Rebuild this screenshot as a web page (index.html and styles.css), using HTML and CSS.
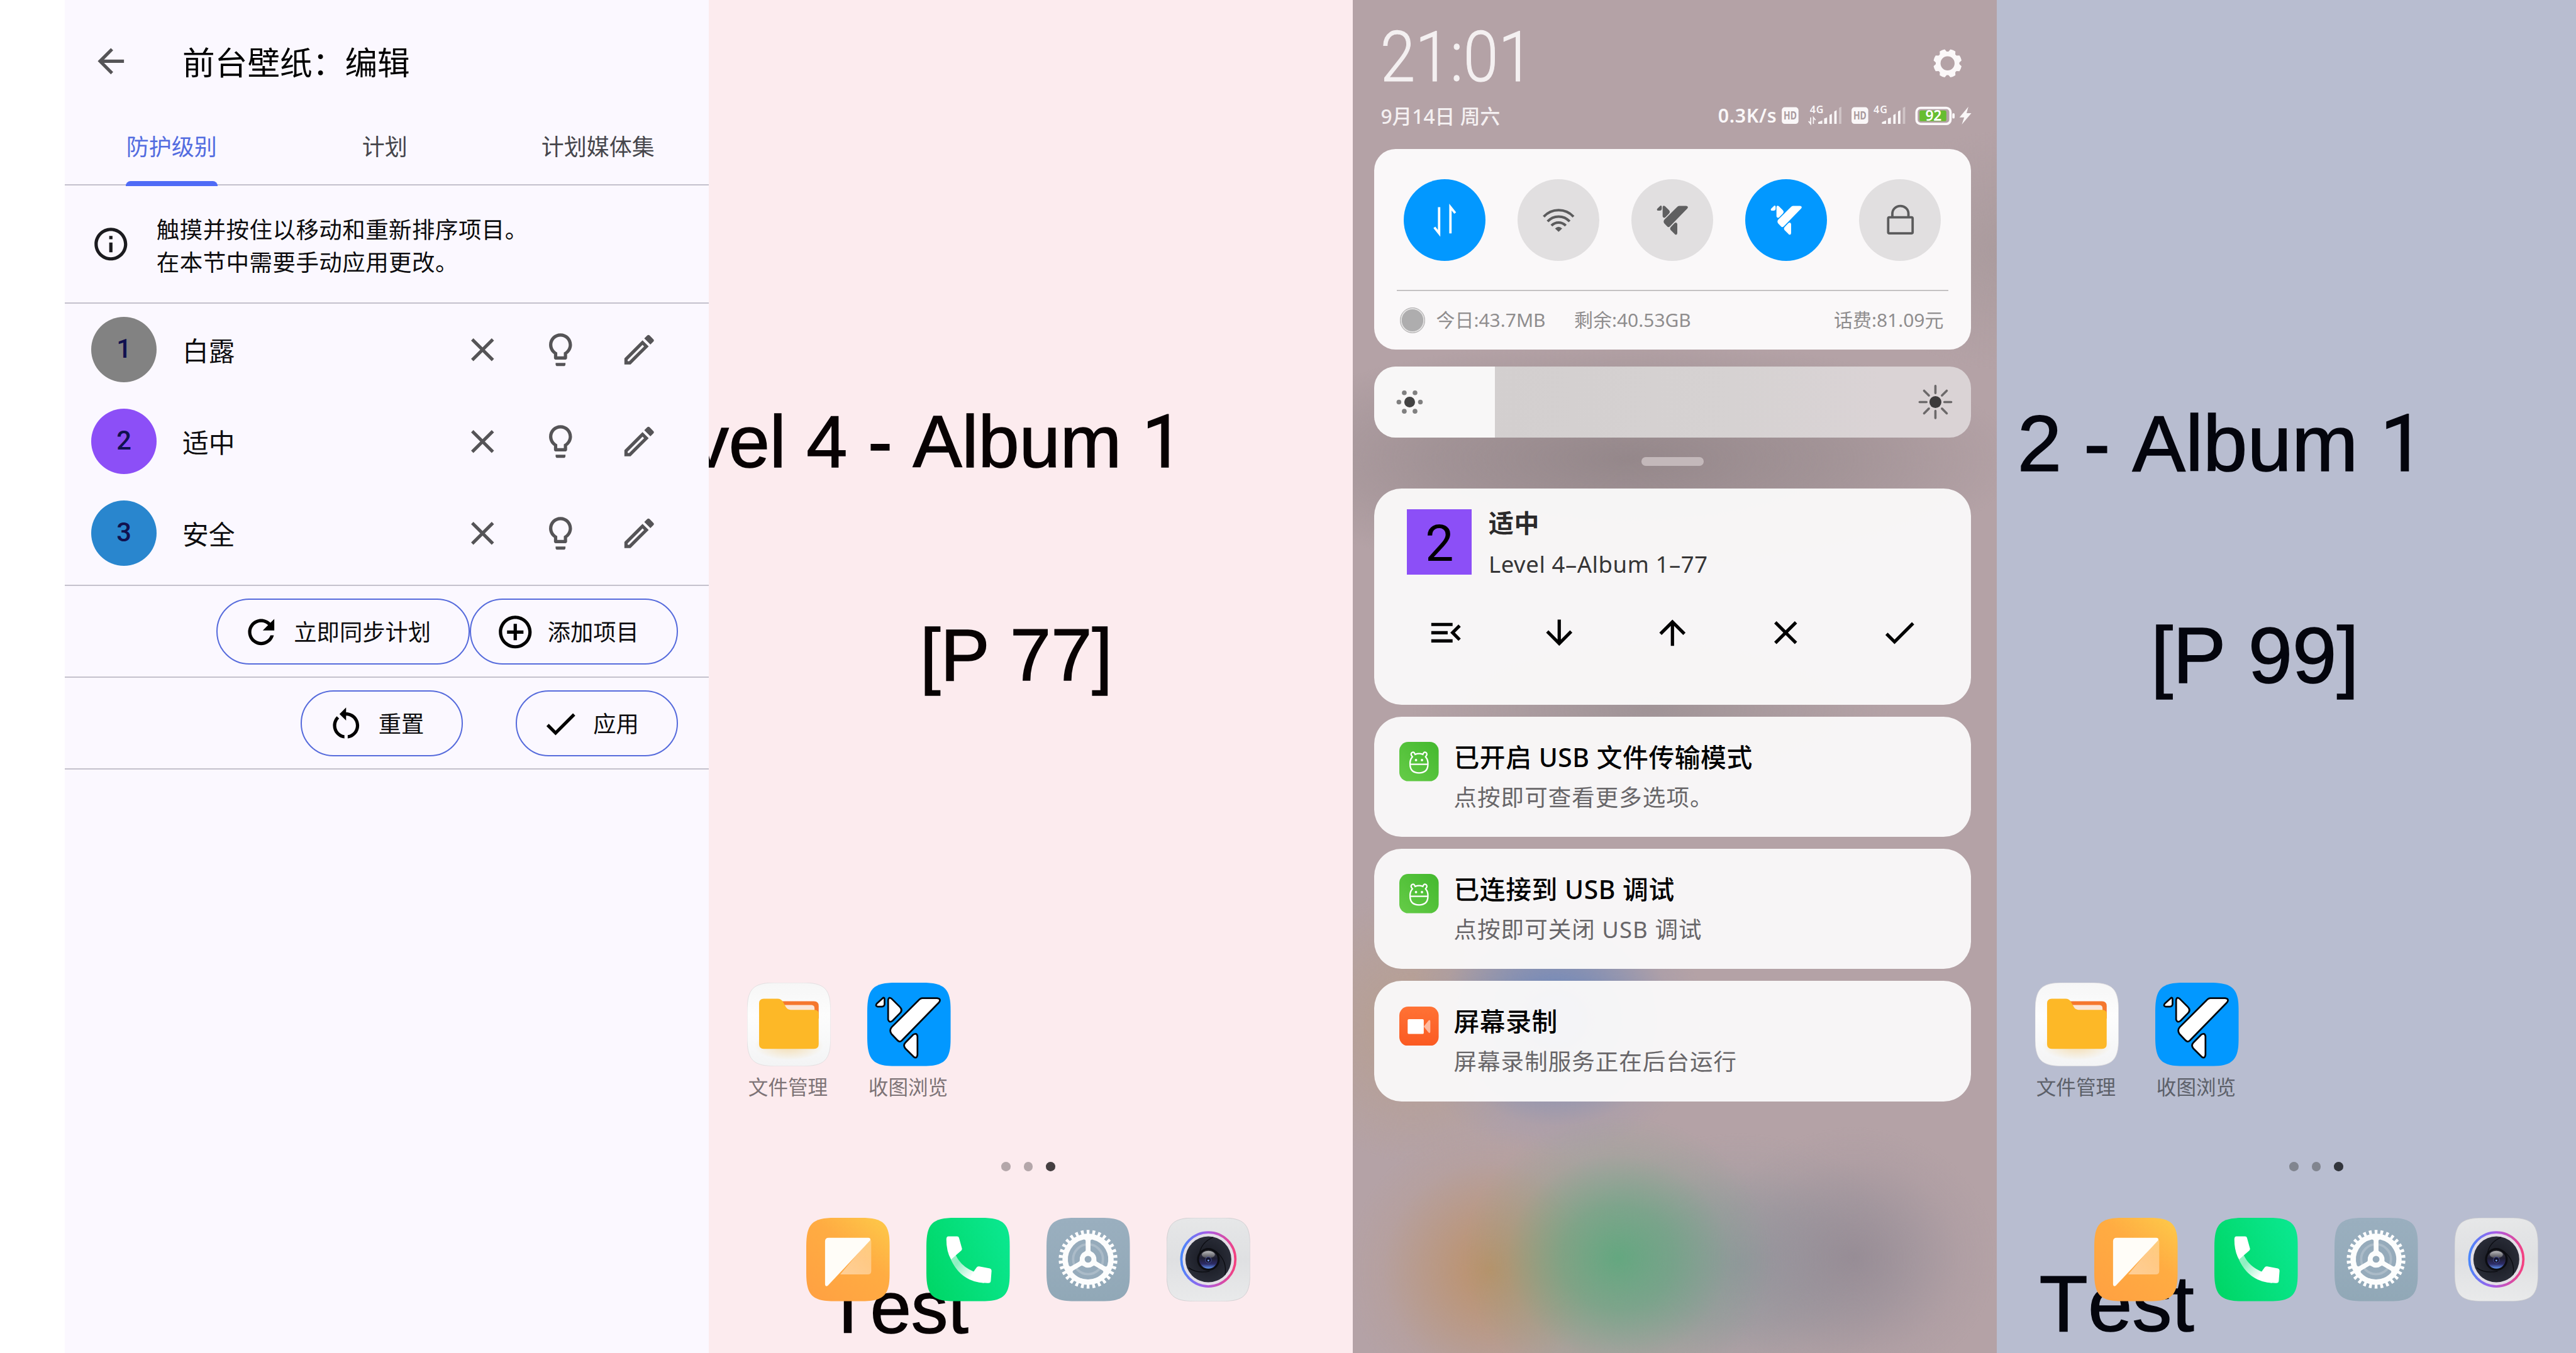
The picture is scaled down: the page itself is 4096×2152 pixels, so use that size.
FILE: index.html
```html
<!DOCTYPE html>
<html lang="zh-CN">
<head>
<meta charset="utf-8">
<title>前台壁纸：编辑</title>
<link rel="stylesheet" href="styles.css">
</head>
<body>
<!-- Shared icon definitions -->
<svg class="defs" aria-hidden="true">
  <defs>
    <linearGradient id="g-file" x1="0" y1="0" x2="0" y2="1"><stop offset="0" stop-color="#f6f6f6"/><stop offset=".4" stop-color="#fdfdfd"/><stop offset="1" stop-color="#f3f4f5"/></linearGradient>
    <radialGradient id="g-glow" cx=".5" cy=".5" r=".5"><stop offset=".3" stop-color="#f3dcae" stop-opacity=".7"/><stop offset="1" stop-color="#f3dcae" stop-opacity="0"/></radialGradient>
    <linearGradient id="g-msg" x1=".2" y1="1" x2="1" y2="0"><stop offset="0" stop-color="#ffa242"/><stop offset=".55" stop-color="#ffac42"/><stop offset="1" stop-color="#fdcb4a"/></linearGradient>
    <linearGradient id="g-fold" x1="1" y1="0" x2="0" y2="1"><stop offset="0" stop-color="#fff" stop-opacity=".3"/><stop offset="1" stop-color="#fff" stop-opacity=".45"/></linearGradient>
    <linearGradient id="g-call" x1="0" y1=".7" x2="1" y2=".3"><stop offset="0" stop-color="#00d768"/><stop offset="1" stop-color="#0ae78e"/></linearGradient>
    <linearGradient id="g-wire" gradientUnits="userSpaceOnUse" x1="42" y1="66" x2="78" y2="98"><stop offset="0" stop-color="#fff" stop-opacity=".6"/><stop offset=".3" stop-color="#fff" stop-opacity=".55"/><stop offset="1" stop-color="#fff"/></linearGradient>
    <linearGradient id="g-set" x1="0" y1="0" x2="0" y2="1"><stop offset="0" stop-color="#9aafbf"/><stop offset="1" stop-color="#91a8b7"/></linearGradient>
    <linearGradient id="g-cam" x1="0" y1="0" x2="0" y2="1"><stop offset="0" stop-color="#e6e7e8"/><stop offset=".5" stop-color="#dfe0e2"/><stop offset="1" stop-color="#e9eaeb"/></linearGradient>
    <linearGradient id="g-ring" x1="0" y1=".55" x2="1" y2=".6"><stop offset="0" stop-color="#4a86fb"/><stop offset=".45" stop-color="#a55ce8"/><stop offset="1" stop-color="#f5407f"/></linearGradient>
    <radialGradient id="g-disc"><stop offset="0" stop-color="#15171f"/><stop offset="1" stop-color="#292c37"/></radialGradient>
    <linearGradient id="g-lens" x1="0" y1="0" x2="0" y2="1"><stop offset="0" stop-color="#3d3d42"/><stop offset=".45" stop-color="#1f1f35"/><stop offset=".75" stop-color="#2d2b66"/><stop offset="1" stop-color="#5f92f0"/></linearGradient>
    <linearGradient id="g-gloss" x1="0" y1="0" x2="0" y2="1"><stop offset="0" stop-color="#b9b9bb"/><stop offset="1" stop-color="#4a4a52"/></linearGradient>
    <linearGradient id="g-bot" x1="1" y1="0" x2="0" y2="1"><stop offset="0" stop-color="#43b82e"/><stop offset="1" stop-color="#66cc48"/></linearGradient>
    <linearGradient id="g-rec" x1="0" y1="0" x2="0" y2="1"><stop offset="0" stop-color="#ff7235"/><stop offset="1" stop-color="#fb5a22"/></linearGradient>
  </defs>

  <symbol id="squircle" viewBox="0 0 140 140"><path d="M0 48C0 10 10 0 48 0H92C130 0 140 10 140 48V92C140 130 130 140 92 140H48C10 140 0 130 0 92Z"/></symbol>

  <symbol id="mark" viewBox="0 0 140 140">
    <path d="M26.7 25.3Q29 25 29 28V36Q28.7 40 24.500 40.200L17.500 40.200Q12.500 39 16.500 34.500Z"/>
    <path d="M35 29Q36 23 41 27L54.500 40.500Q60 46 55 51L42.500 63.800Q37 68 35 62Z"/>
    <path d="M92.300 26H117Q125 27 120 33.500L58 97Q54 100.500 50.500 96.500L40.500 86Q36.500 80 41 74.500L86 29.500Q89 26 92.300 26Z"/>
    <path d="M76.700 87.500Q83 83 84.200 90V121Q83 128.500 77.500 124L64 110.500Q59.500 105 64 100.500Z"/>
  </symbol>

  <symbol id="app-files" viewBox="0 0 140 140">
    <use href="#squircle" width="140" height="140" fill="url(#g-file)" stroke="#dcdadb" stroke-width=".8"/>
    <ellipse cx="70" cy="106" rx="58" ry="24" fill="url(#g-glow)"/>
    <path d="M56 31H112Q120 31 120 39V60H56Z" fill="#f5772d"/>
    <path d="M60 37.500H108Q113 38 113 43V52H60Z" fill="#fbe6d6"/>
    <path d="M28 27H51Q57 27 60 32L65 41Q67.500 45.500 73 45.500H112Q118 45.500 120 50V103Q120 111 112 111H28Q20 111 20 103V35Q20 27 28 27Z" fill="#fdb827"/>
  </symbol>

  <symbol id="app-gallery" viewBox="0 0 140 140">
    <use href="#squircle" width="140" height="140" fill="#0298ff"/>
    <use href="#mark" width="140" height="140" fill="#fff" stroke="#05080d" stroke-width="2.900" stroke-linejoin="round"/>
  </symbol>

  <symbol id="app-message" viewBox="0 0 140 140">
    <use href="#squircle" width="140" height="140" fill="url(#g-msg)"/>
    <path d="M106 37L57 95H103Q109 95 109 89V40Q109 36 106 37Z" fill="url(#g-fold)"/>
    <path d="M31.500 39.500Q31.500 33.500 37.500 33.500H104Q109 34 107 38L36 114Q32 116.500 31.500 111Z" fill="#fffdf8"/>
  </symbol>

  <symbol id="app-phone" viewBox="0 0 140 140">
    <use href="#squircle" width="140" height="140" fill="url(#g-call)"/>
    <path d="M49 62Q58 82 80.300 90.700L97 109.500Q58 107 41 70Z" fill="url(#g-wire)"/>
    <path d="M37 31H51.500Q54 31 54.700 33.500L59.700 51.500Q60 54 58 55.500L41.300 70Q33.500 56 33.500 36Q33.500 31 37 31Z" fill="#fff"/>
    <path d="M78 92L84 83.500Q85.500 81 88.500 81.500L106.500 85Q109.500 86 109.300 89L108 106Q107.500 109.300 104 109.500Q88 110 73 101Z" fill="#fff"/>
  </symbol>

  <symbol id="app-settings" viewBox="0 0 140 140">
    <use href="#squircle" width="140" height="140" fill="url(#g-set)"/>
    <g transform="translate(69.7 69.5)">
      <circle r="45.500" fill="none" stroke="#fff" stroke-width="7.500" stroke-dasharray="4.400 4.534" stroke-dashoffset="2.200" transform="rotate(-90)" pathLength="268.020"/>
      <circle r="43" fill="#fcfdfd"/>
      <g fill="#96abbb" stroke="#96abbb" stroke-width="6" stroke-linejoin="round">
        <path id="cut" d="M7 -30A31 31 0 0 1 29.500 9.200L17 2.200A17 17 0 0 0 7 -15.500Z"/>
        <use href="#cut" transform="rotate(120)"/>
        <use href="#cut" transform="rotate(240)"/>
      </g>
      <circle r="25" fill="none" stroke="#fff" stroke-opacity=".2" stroke-width="4"/>
      <path d="M0 -36V-10M31 18L9 5M-31 18L-9 5" stroke="#fcfdfd" stroke-width="7.500"/>
      <circle r="9.500" fill="#96abbb" stroke="#fcfdfd" stroke-width="7.500"/>
    </g>
  </symbol>

  <symbol id="app-camera" viewBox="0 0 140 140">
    <use href="#squircle" width="140" height="140" fill="url(#g-cam)" stroke="#c9c9cc" stroke-width=".8"/>
    <g transform="translate(70 69.7)">
      <circle r="45.300" fill="#e3dfe6" stroke="url(#g-ring)" stroke-width="4"/>
      <circle r="38.500" fill="url(#g-disc)"/>
      <path d="M8 -37Q-13 -28 -15 -8M13 -13Q32 2 28 26M-33 14Q-20 24 2 20" fill="none" stroke="#0b0c11" stroke-width="1.400"/>
      <circle r="19" cy="0" fill="#0c0d12"/>
      <circle r="15.500" fill="url(#g-lens)"/>
      <ellipse cy="-8" rx="11" ry="6" fill="url(#g-gloss)"/>
      <circle cy="1" r="5" fill="#14142c" stroke="#4a51a0" stroke-width="1"/>
      <circle cy="2" r="1.500" fill="#7aa4f5"/>
    </g>
  </symbol>

  <symbol id="i-close" viewBox="0 0 24 24"><path d="M19 6.410L17.590 5 12 10.590 6.410 5 5 6.410 10.590 12 5 17.590 6.410 19 12 13.410 17.590 19 19 17.590 13.410 12z"/></symbol>
  <symbol id="i-bulb" viewBox="0 0 24 24"><path d="M9 21c0 .5.4 1 1 1h4c.6 0 1-.5 1-1v-1H9v1zm3-19C8.100 2 5 5.100 5 9c0 2.400 1.200 4.500 3 5.700V17c0 .5.4 1 1 1h6c.6 0 1-.5 1-1v-2.300c1.800-1.300 3-3.400 3-5.700 0-3.900-3.100-7-7-7zm2.900 11.100l-.9.600V16h-4v-2.300l-.9-.6C7.800 12.200 7 10.600 7 9c0-2.800 2.200-5 5-5s5 2.200 5 5c0 1.600-.8 3.200-2.100 4.100z"/></symbol>
  <symbol id="i-edit" viewBox="0 0 24 24"><path d="M14.060 9.020l.92.920L5.920 19H5v-.92l9.060-9.060M17.660 3c-.25 0-.51.100-.7.290l-1.830 1.830 3.750 3.750 1.830-1.830c.39-.39.390-1.020 0-1.410l-2.340-2.340c-.2-.2-.45-.29-.71-.29zm-3.600 3.190L3 17.250V21h3.750L17.810 9.940l-3.750-3.750z"/></symbol>
  <symbol id="i-check" viewBox="0 0 24 24"><path d="M9 16.170L4.830 12l-1.420 1.410L9 19 21 7l-1.410-1.410z"/></symbol>
</svg>

<main class="stage">

  <!-- Editor screen -->
  <section class="screen editor">
    <header class="appbar">
      <svg class="ic back" viewBox="0 0 24 24"><path d="M20 11H7.830l5.590-5.590L12 4l-8 8 8 8 1.410-1.410L7.830 13H20v-2z"/></svg>
      <h1 class="appbar-title">前台壁纸：编辑</h1>
    </header>
    <nav class="tabs">
      <span class="tab active">防护级别</span>
      <span class="tab">计划</span>
      <span class="tab">计划媒体集</span>
    </nav>
    <div class="hint">
      <svg class="ic dark" viewBox="0 0 24 24"><path d="M11 7h2v2h-2zm0 4h2v6h-2zm1-9C6.480 2 2 6.480 2 12s4.480 10 10 10 10-4.480 10-10S17.520 2 12 2zm0 18c-4.410 0-8-3.590-8-8s3.590-8 8-8 8 3.590 8 8-3.590 8-8 8z"/></svg>
      <p class="hint-text">触摸并按住以移动和重新排序项目。<br>在本节中需要手动应用更改。</p>
    </div>
    <ul class="levels">
      <li class="level"><span class="badge gray">1</span><span class="name">白露</span><span class="tool"><svg class="ic"><use href="#i-close"/></svg></span><span class="tool"><svg class="ic"><use href="#i-bulb"/></svg></span><span class="tool"><svg class="ic"><use href="#i-edit"/></svg></span></li>
      <li class="level"><span class="badge purple">2</span><span class="name">适中</span><span class="tool"><svg class="ic"><use href="#i-close"/></svg></span><span class="tool"><svg class="ic"><use href="#i-bulb"/></svg></span><span class="tool"><svg class="ic"><use href="#i-edit"/></svg></span></li>
      <li class="level"><span class="badge blue">3</span><span class="name">安全</span><span class="tool"><svg class="ic"><use href="#i-close"/></svg></span><span class="tool"><svg class="ic"><use href="#i-bulb"/></svg></span><span class="tool"><svg class="ic"><use href="#i-edit"/></svg></span></li>
    </ul>
    <div class="buttons">
      <button class="btn"><svg class="ic black" viewBox="0 0 24 24"><path d="M17.650 6.350C16.200 4.900 14.210 4 12 4c-4.420 0-7.990 3.580-7.990 8s3.570 8 7.990 8c3.730 0 6.840-2.550 7.730-6h-2.080c-.82 2.330-3.040 4-5.650 4-3.310 0-6-2.690-6-6s2.690-6 6-6c1.660 0 3.140.690 4.220 1.780L13 11h7V4l-2.350 2.350z"/></svg>立即同步计划</button>
      <button class="btn"><svg class="ic black" viewBox="0 0 24 24"><path d="M13 7h-2v4H7v2h4v4h2v-4h4v-2h-4V7zm-1-5C6.480 2 2 6.480 2 12s4.480 10 10 10 10-4.480 10-10S17.520 2 12 2zm0 18c-4.410 0-8-3.590-8-8s3.590-8 8-8 8 3.590 8 8-3.590 8-8 8z"/></svg>添加项目</button>
    </div>
    <div class="buttons spaced">
      <button class="btn"><svg class="ic black" viewBox="0 0 24 24"><path d="M12 5V2L8 6l4 4V7c3.310 0 6 2.690 6 6 0 2.970-2.170 5.430-5 5.910v2.020c3.950-.49 7-3.850 7-7.930 0-4.420-3.580-8-8-8zm-6 8c0-1.650.670-3.150 1.760-4.240L6.340 7.340C4.900 8.790 4 10.790 4 13c0 4.080 3.050 7.440 7 7.930v-2.020c-2.830-.48-5-2.940-5-5.910z"/></svg>重置</button>
      <button class="btn"><svg class="ic black"><use href="#i-check"/></svg>应用</button>
    </div>
  </section>

  <!-- Home screen, level 4 wallpaper -->
  <section class="screen home pink">
    <div class="wallpaper wp-4">
      <span class="wp-line wp-a">Level 4 - Album <span class="one">1</span></span>
      <span class="wp-line wp-b">[P 77]</span>
      <span class="wp-line wp-c">Test</span>
    </div>
    <div class="apps">
      <figure class="app"><svg class="app-ic"><use href="#app-files"/></svg><figcaption>文件管理</figcaption></figure>
      <figure class="app"><svg class="app-ic"><use href="#app-gallery"/></svg><figcaption>收图浏览</figcaption></figure>
    </div>
    <div class="dots"><i></i><i></i><i class="on"></i></div>
    <div class="dock">
      <svg class="app-ic"><use href="#app-message"/></svg>
      <svg class="app-ic"><use href="#app-phone"/></svg>
      <svg class="app-ic"><use href="#app-settings"/></svg>
      <svg class="app-ic"><use href="#app-camera"/></svg>
    </div>
  </section>

  <!-- Notification shade -->
  <section class="screen shade">
    <header class="clock">
      <div class="clock-row">
        <span class="time">21:01</span>
        <svg class="gear" viewBox="-24 -24 48 48">
          <circle r="15.800" fill="none" stroke="#fbf8f9" stroke-width="8"/>
          <g fill="#fbf8f9" transform="rotate(22.500)"><path id="cog" d="M-6.500 -18L-4.500 -23.500Q0 -24.500 4.500 -23.500L6.500 -18Z"/><use href="#cog" transform="rotate(45)"/><use href="#cog" transform="rotate(90)"/><use href="#cog" transform="rotate(135)"/><use href="#cog" transform="rotate(180)"/><use href="#cog" transform="rotate(225)"/><use href="#cog" transform="rotate(270)"/><use href="#cog" transform="rotate(315)"/></g>
        </svg>
      </div>
      <div class="status-row">
        <span class="date">9月14日 周六</span>
        <svg class="status" viewBox="2875 172 435 44">
          <g fill="#faf7f8">
            <text class="st-speed" x="2881" y="206" textLength="98">0.3K/s</text>
            <rect x="2988" y="180" width="28" height="28" rx="5"/>
            <rect x="3105" y="180" width="28" height="28" rx="5"/>
            <text class="st-net" x="3035" y="189.500" textLength="23">4G</text>
            <text class="st-net" x="3142" y="189.500" textLength="23">4G</text>
            <path d="M3036.500 197V208L3033 203.500M3041 208V197L3044.500 201.500" fill="none" stroke="#faf7f8" stroke-width="1.800"/>
            <path d="M3049 205L3056 202V208H3049ZM3059 199L3064 197V208H3059ZM3068 193L3072 191V208H3068ZM3076 187L3080 185V208H3076Z"/>
            <path d="M3156 205L3163 202V208H3156ZM3166 199L3171 197V208H3166ZM3175 193L3179 191V208H3175ZM3183 187L3187 185V208H3183Z"/>
            <path d="M3084 181L3088 179V208H3084ZM3191 181L3195 179V208H3191Z" opacity=".4"/>
            <rect x="3274" y="190" width="4" height="9" rx="2"/>
            <path d="M3301 179L3286 197H3294L3290 209L3306 190H3298Z"/>
          </g>
          <text class="st-hd" x="2991" y="200.500" textLength="22" lengthAdjust="spacingAndGlyphs">HD</text>
          <text class="st-hd" x="3108" y="200.500" textLength="22" lengthAdjust="spacingAndGlyphs">HD</text>
          <rect x="3214" y="181" width="57" height="27" rx="7" fill="none" stroke="#fbf8f9" stroke-width="4"/>
          <rect x="3219" y="185.500" width="45" height="18" rx="3" fill="#67bd30"/>
          <text class="st-bat" x="3229" y="203" textLength="27">92</text>
        </svg>
      </div>
    </header>

    <div class="card toggles">
      <div class="tiles">
        <span class="tile on"><svg viewBox="-33 -33 66 66"><path d="M-9.500 -22V22L-17.500 12M9.500 22V-22L17.500 -12" fill="none" stroke="#fff" stroke-width="4"/></svg></span>
        <span class="tile"><svg viewBox="-33 -33 66 66"><g fill="none" stroke="#5b5b5c" stroke-width="4.200"><path d="M-25 -6A34 34 0 0 1 25 -6M-18.500 2A25 25 0 0 1 18.500 2M-12 9A16.500 16.500 0 0 1 12 9"/></g><path d="M0 19.500L-6 14Q0 8 6 14Z" fill="#5b5b5c"/></svg></span>
        <span class="tile"><svg viewBox="-1.600 5.700 140 140"><use href="#mark" width="140" height="140" fill="#5f5f60" stroke="#5f5f60" stroke-width="3"/></svg></span>
        <span class="tile on"><svg viewBox="-1.600 5.700 140 140"><use href="#mark" width="140" height="140" fill="#fff" stroke="#fff" stroke-width="3"/></svg></span>
        <span class="tile"><svg viewBox="-33 -33 66 66"><g fill="none" stroke="#5b5b5c" stroke-width="4"><rect x="-20" y="-5" width="41" height="27" rx="2"/><path d="M-13 -5V-11A13.500 13 0 0 1 14 -11V-5"/></g></svg></span>
      </div>
      <div class="usage">
        <i class="usage-dot"></i><span>今日:43.7MB</span><span class="left">剩余:40.53GB</span><span class="fee">话费:81.09元</span>
      </div>
    </div>

    <div class="slider">
      <div class="slider-fill">
        <svg class="sun" viewBox="-30 -30 60 60"><circle r="9" fill="#434343"/><g fill="#808080"><circle cx="-18" r="4"/><circle cx="18" r="4"/><circle cx="-9" cy="-15.500" r="4"/><circle cx="9" cy="-15.500" r="4"/><circle cx="-9" cy="15.500" r="4"/><circle cx="9" cy="15.500" r="4"/></g></svg>
      </div>
      <svg class="sun" viewBox="-30 -30 60 60"><circle r="10" fill="#3c3a3b"/><path d="M0 -27V-15M0 15V27M-26.500 0H-15M15 0H26.500M-19 -19L-11 -11M19 -19L11 -11M-19 19L-11 11M19 19L11 11" stroke="#6c696a" stroke-width="3.800" stroke-linecap="round"/></svg>
    </div>
    <div class="handle"></div>

    <article class="card level-note">
      <div class="note-head">
        <span class="thumb">2</span>
        <div><h2>适中</h2><p>Level 4–Album 1–77</p></div>
      </div>
      <div class="note-actions">
        <svg class="ic black" viewBox="0 0 24 24"><path d="M3 18h13v-2H3v2zM3 13h10v-2H3v2zm0-7v2h13V6H3zm18 9.590L17.420 12 21 8.410 19.590 7l-5 5 5 5L21 15.590z"/></svg>
        <svg class="ic black" viewBox="0 0 24 24"><path d="M20 12l-1.410-1.410L13 16.170V4h-2v12.170l-5.580-5.590L4 12l8 8 8-8z"/></svg>
        <svg class="ic black" viewBox="0 0 24 24"><path d="M4 12l1.410 1.410L11 7.830V20h2V7.830l5.580 5.590L20 12l-8-8-8 8z"/></svg>
        <svg class="ic black"><use href="#i-close"/></svg>
        <svg class="ic black"><use href="#i-check"/></svg>
      </div>
    </article>

    <article class="card note">
      <svg class="note-ic" viewBox="0 0 66 66"><rect width="66" height="66" rx="15" fill="url(#g-bot)"/><g fill="none" stroke="#fff" stroke-width="2.400" stroke-linecap="round"><path d="M18 37.500H48Q48 52 33 52Q18 52 18 37.500Q17.500 30 22 25Q18 21 21 18Q24.500 15.500 26.500 21Q33 18.500 39.500 21Q41.500 15.500 45 18Q48 21 44 25Q48.500 30 48 37.500"/></g><circle cx="28" cy="30.500" r="2" fill="#fff"/><circle cx="38" cy="30.500" r="2" fill="#fff"/></svg>
      <div><h2>已开启 USB 文件传输模式</h2><p>点按即可查看更多选项。</p></div>
    </article>
    <article class="card note">
      <svg class="note-ic" viewBox="0 0 66 66"><rect width="66" height="66" rx="15" fill="url(#g-bot)"/><g fill="none" stroke="#fff" stroke-width="2.400" stroke-linecap="round"><path d="M18 37.500H48Q48 52 33 52Q18 52 18 37.500Q17.500 30 22 25Q18 21 21 18Q24.500 15.500 26.500 21Q33 18.500 39.500 21Q41.500 15.500 45 18Q48 21 44 25Q48.500 30 48 37.500"/></g><circle cx="28" cy="30.500" r="2" fill="#fff"/><circle cx="38" cy="30.500" r="2" fill="#fff"/></svg>
      <div><h2>已连接到 USB 调试</h2><p>点按即可关闭 USB 调试</p></div>
    </article>
    <article class="card note">
      <svg class="note-ic" viewBox="0 0 66 66"><rect width="66" height="66" rx="15" fill="url(#g-rec)"/><rect x="14" y="21" width="27" height="25" rx="2" fill="#fff"/><path d="M41 33.500L49 23.500Q52 21.500 52 25V42Q52 45.500 49 43.500Z" fill="#fff" opacity=".55"/></svg>
      <div><h2>屏幕录制</h2><p>屏幕录制服务正在后台运行</p></div>
    </article>
  </section>

  <!-- Home screen, level 2 wallpaper -->
  <section class="screen home slate">
    <div class="wallpaper wp-2">
      <span class="wp-line wp-a">Level 2 - Album <span class="one">1</span></span>
      <span class="wp-line wp-b">[P 99]</span>
      <span class="wp-line wp-c">Test</span>
    </div>
    <div class="apps">
      <figure class="app"><svg class="app-ic"><use href="#app-files"/></svg><figcaption>文件管理</figcaption></figure>
      <figure class="app"><svg class="app-ic"><use href="#app-gallery"/></svg><figcaption>收图浏览</figcaption></figure>
    </div>
    <div class="dots"><i></i><i></i><i class="on"></i></div>
    <div class="dock">
      <svg class="app-ic"><use href="#app-message"/></svg>
      <svg class="app-ic"><use href="#app-phone"/></svg>
      <svg class="app-ic"><use href="#app-settings"/></svg>
      <svg class="app-ic"><use href="#app-camera"/></svg>
    </div>
  </section>
</main>
</body>
</html>
```
FILE: styles.css
```css
/* 43.2rem spans the full window width */
html {
  font-size: 94.8148px;
}

* {
  box-sizing: border-box;
  margin: 0;
  padding: 0;
}

body {
  background: #fff;
  font-family: "Noto Sans", "Noto Sans CJK SC", sans-serif;
  line-height: 1;
  overflow: hidden;
}

svg {
  display: block;
  flex: none;
}

.defs {
  position: absolute;
  width: 0;
  height: 0;
}

.stage {
  display: flex;
  width: 43.2rem;
  height: 22.7rem;
  padding-left: 1.09rem;
  overflow: hidden;
}

.screen {
  position: relative;
  flex: none;
  display: flex;
  flex-direction: column;
  width: 10.8rem;
  height: 100%;
  overflow: hidden;
}

.ic {
  width: 0.66rem;
  height: 0.66rem;
  fill: #555457;
}

.ic.dark {
  fill: #1b1b1f;
}

.ic.black {
  fill: #000;
}

/* ---------- Editor ---------- */

.editor {
  background: #fbf8ff;
  color: #0c0c0e;
}

.appbar {
  display: flex;
  align-items: center;
  gap: 0.87rem;
  height: 1.8rem;
  padding: 0.26rem 0 0 0.44rem;
}

.appbar-title {
  font-size: 0.545rem;
  font-weight: 400;
  line-height: 0.8rem;
  color: #000;
  padding-top: 0.04rem;
}

.tabs {
  display: flex;
  height: 1.315rem;
  border-bottom: 0.03rem solid #c4c1cc;
}

.tab {
  position: relative;
  width: 3.575rem;
  line-height: 1.32rem;
  text-align: center;
  font-size: 0.38rem;
  color: #46464c;
}

.tab.active {
  color: #536ce0;
}

.tab.active::after {
  content: "";
  position: absolute;
  left: 50%;
  bottom: -0.03rem;
  width: 1.54rem;
  height: 0.085rem;
  margin-left: -0.77rem;
  border-radius: 0.08rem 0.08rem 0 0;
  background: #4f6bf6;
}

.hint {
  display: flex;
  align-items: center;
  gap: 0.435rem;
  height: 1.98rem;
  padding-left: 0.44rem;
  border-bottom: 0.03rem solid #c4c1cc;
}

.hint-text {
  font-size: 0.385rem;
  letter-spacing: 0.0045rem;
  line-height: 0.548rem;
  padding-top: 0.07rem;
}

.levels {
  list-style: none;
  height: 4.74rem;
  border-bottom: 0.03rem solid #c4c1cc;
}

.level {
  display: flex;
  align-items: center;
  height: 1.54rem;
  padding: 0 0.515rem 0 0.44rem;
}

.badge {
  width: 1.1rem;
  height: 1.1rem;
  border-radius: 50%;
  font: 500 0.44rem/1.08rem Roboto, sans-serif;
  text-align: center;
  color: #11114f;
}

.badge.gray {
  background: #828282;
}

.badge.purple {
  background: #8c4ff7;
}

.badge.blue {
  background: #2986ce;
}

.name {
  flex: 1;
  margin-left: 0.43rem;
  font-size: 0.44rem;
  line-height: 0.7rem;
  padding-top: 0.035rem;
}

.tool {
  display: flex;
  justify-content: center;
  width: 1.313rem;
}

.buttons {
  display: flex;
  justify-content: flex-end;
  align-items: center;
  height: 1.54rem;
  padding-right: 0.52rem;
  border-bottom: 0.03rem solid #c4c1cc;
}

.buttons.spaced {
  gap: 0.88rem;
}

.btn {
  display: flex;
  align-items: center;
  gap: 0.215rem;
  height: 1.1rem;
  padding: 0.02rem 0.635rem 0 0.405rem;
  border: 0.028rem solid #566bdc;
  border-radius: 0.55rem;
  background: none;
  font-family: inherit;
  font-size: 0.383rem;
  line-height: 1rem;
  color: #0c0c0e;
}

/* ---------- Home screens ---------- */

.home {
  padding-top: 16.49rem;
}

.pink {
  background: #fcebee;
}

.slate {
  background: #b8bdd0;
}

/* The wallpaper's own lettering lies under the launcher */
.wallpaper {
  position: absolute;
  inset: 0;
  font-family: "Liberation Sans", Arial, sans-serif;
  font-kerning: none;
  line-height: 1.3rem;
  white-space: nowrap;
  -webkit-text-stroke-width: 0.016rem;
}

.wp-line {
  position: absolute;
}

.one {
  font-family: Roboto, sans-serif;
  line-height: 0;
}

.wp-4 {
  font-size: 1.235rem;
  color: #080203;
}

.wp-4 .wp-a { left: -1.66rem; top: 6.76rem; }
.wp-4 .wp-b { left: 3.54rem; top: 10.34rem; }
.wp-4 .wp-c { left: 1.95rem; top: 21.28rem; }

.wp-2 {
  font-size: 1.335rem;
  color: #04050d;
}

.wp-2 .wp-a { left: -3.22rem; top: 6.79rem; }
.wp-2 .wp-b { left: 2.58rem; top: 10.35rem; }
.wp-2 .wp-c { left: 0.71rem; top: 21.22rem; }

.app-ic {
  width: 1.4rem;
  height: 1.4rem;
  overflow: visible;
}

.apps,
.dots,
.dock {
  position: relative;
  display: flex;
}

.apps {
  gap: 0.615rem;
  padding-left: 0.635rem;
}

.app {
  width: 1.4rem;
}

.app figcaption {
  margin: 0.125rem -0.19rem 0 -0.21rem;
  text-align: center;
  font-size: 0.333rem;
  line-height: 0.44rem;
  color: #7d7376;
}

.slate .app figcaption {
  color: #5c6069;
}

.dots {
  gap: 0.217rem;
  margin: 1.04rem 0 0.785rem;
  padding-left: 4.905rem;
}

.dots i {
  width: 0.155rem;
  height: 0.155rem;
  border-radius: 50%;
  background: #b4a7aa;
}

.dots .on {
  background: #453f41;
}

.slate .dots i {
  background: #81858f;
}

.slate .dots .on {
  background: #32353c;
}

.dock {
  gap: 0.613rem;
  padding-left: 1.635rem;
}

/* ---------- Notification shade ---------- */

.shade {
  padding: 0 0.44rem 0 0.36rem;
  background:
    radial-gradient(ellipse 2.6rem 2.4rem at 4.45rem 21.1rem, rgba(92, 168, 124, 0.9), rgba(98, 166, 126, 0.65) 36%, rgba(110, 165, 130, 0.18) 72%, rgba(110, 165, 130, 0) 100%),
    radial-gradient(ellipse 2.4rem 2.4rem at 2.3rem 21.3rem, rgba(190, 142, 94, 0.85), rgba(190, 145, 105, 0.5) 42%, rgba(190, 150, 120, 0.15) 75%, rgba(190, 150, 120, 0) 100%),
    radial-gradient(ellipse 2.4rem 2.2rem at 8.4rem 21.1rem, rgba(146, 136, 146, 0.8), rgba(148, 140, 150, 0.5) 42%, rgba(150, 140, 150, 0.14) 75%, rgba(150, 140, 150, 0) 100%),
    radial-gradient(ellipse 2.8rem 2.2rem at 6.5rem 21.2rem, rgba(142, 150, 156, 0.85), rgba(142, 150, 156, 0.5) 45%, rgba(142, 150, 156, 0.14) 75%, rgba(142, 150, 156, 0) 100%),
    radial-gradient(ellipse 2.5rem 2.3rem at 3.4rem 17.1rem, rgba(90, 130, 195, 0.95), rgba(110, 135, 185, 0.7) 36%, rgba(145, 148, 178, 0.2) 78%, rgba(150, 150, 180, 0) 100%),
    radial-gradient(ellipse 2.2rem 2.3rem at 1rem 17.2rem, rgba(184, 158, 138, 0.8), rgba(184, 158, 140, 0) 100%),
    radial-gradient(ellipse 6.6rem 2rem at 4.6rem 7.7rem, rgba(147, 134, 137, 0.95), rgba(150, 137, 140, 0.6) 50%, rgba(160, 145, 149, 0) 100%),
    radial-gradient(ellipse 4rem 1.4rem at 5rem 11.9rem, rgba(155, 144, 147, 0.8), rgba(160, 145, 149, 0) 100%),
    radial-gradient(ellipse 2.5rem 2rem at 10.9rem 4.2rem, rgba(167, 153, 155, 0.75), rgba(167, 153, 155, 0) 100%),
    #b4a2a6;
}

.clock {
  height: 2.495rem;
  color: #f4f0f1;
}

.clock-row {
  display: flex;
  justify-content: space-between;
  height: 1.72rem;
}

.time {
  padding: 0.25rem 0 0 0.115rem;
  font: 300 1.18rem/1.42rem Roboto, sans-serif;
  -webkit-text-stroke: 0.012rem #f4f0f1;
  transform: scaleX(0.895);
  transform-origin: 0 50%;
}

.gear {
  width: 0.48rem;
  height: 0.48rem;
  margin: 0.82rem 0.15rem 0 0;
}

.status-row {
  display: flex;
  justify-content: space-between;
  margin-right: -0.05rem;
}

.date {
  padding-left: 0.105rem;
  font-size: 0.335rem;
  font-weight: 500;
  line-height: 0.46rem;
}

.status {
  width: 4.35rem;
  height: 0.44rem;
}

.status text {
  font-family: "Noto Sans", sans-serif;
}

.st-speed {
  font-size: 32px;
  font-weight: 600;
}

.status .st-net {
  font-size: 17px;
  font-weight: 600;
}

.status .st-hd {
  font-size: 18px;
  font-weight: 700;
  fill: #a99a9e;
}

.st-bat {
  font-size: 24px;
  font-weight: 600;
  fill: #fff;
}

.card {
  flex: none;
  width: 10rem;
  border-radius: 0.46rem;
  background: rgba(250, 249, 249, 0.96);
}

.card h2 {
  font-size: 0.43rem;
  font-weight: 500;
  line-height: 0.6rem;
  color: #000;
  letter-spacing: 0.006rem;
}

.card p {
  font-size: 0.385rem;
  line-height: 0.6rem;
  letter-spacing: 0.011rem;
  color: #686669;
}

.toggles {
  height: 3.37rem;
  padding: 0 0.38rem;
  border-radius: 0.36rem;
  background: #faf8f9;
}

.tiles {
  display: flex;
  justify-content: space-between;
  height: 2.39rem;
  padding: 0.51rem 0.12rem 0 0.11rem;
  border-bottom: 0.025rem solid #c4c2c3;
}

.tile {
  display: flex;
  align-items: center;
  justify-content: center;
  width: 1.37rem;
  height: 1.37rem;
  border-radius: 50%;
  background: #e1dfe0;
}

.tile.on {
  background: #0298ff;
}

.tile svg {
  width: 0.66rem;
  height: 0.66rem;
}

.usage {
  display: flex;
  align-items: center;
  height: 0.97rem;
  padding: 0 0.075rem 0 0.045rem;
  font-size: 0.316rem;
  color: #8f8d8e;
}

.usage-dot {
  width: 0.43rem;
  height: 0.43rem;
  margin-right: 0.18rem;
  border: 0.02rem solid #b4b2b3;
  border-radius: 50%;
  background: #aeadae;
  box-shadow: inset 0 0 0 0.02rem #e4e3e3;
}

.left {
  margin-left: 0.48rem;
}

.fee {
  margin-left: auto;
}

.slider {
  flex: none;
  display: flex;
  align-items: center;
  justify-content: space-between;
  width: 10rem;
  height: 1.2rem;
  margin-top: 0.28rem;
  padding-right: 0.295rem;
  border-radius: 0.36rem;
  background: linear-gradient(90deg, #d3cfcf 20%, #d6d2d2 60%, #dad3d5 85%);
  overflow: hidden;
}

.slider-fill {
  display: flex;
  align-items: center;
  width: 2.02rem;
  height: 100%;
  padding-left: 0.295rem;
  background: #f8f7f7;
}

.sun {
  width: 0.6rem;
  height: 0.6rem;
}

.handle {
  flex: none;
  width: 1.04rem;
  height: 0.15rem;
  margin: 0.325rem 0 0.38rem 4.48rem;
  border-radius: 0.07rem;
  background: #c3b8ba;
}

.level-note {
  height: 3.62rem;
  padding: 0.34rem 0.545rem 0;
}

.note-head {
  display: flex;
  gap: 0.28rem;
}

.thumb {
  width: 1.09rem;
  height: 1.1rem;
  background: #8c4ff7;
  font: 400 0.85rem/1.15rem Roboto, sans-serif;
  text-align: center;
  color: #000;
}

.level-note h2 {
  margin-top: -0.06rem;
  font-weight: 700;
  font-size: 0.42rem;
  color: #2b2a2b;
}

.level-note p {
  margin-top: 0.09rem;
  letter-spacing: 0.006rem;
  color: #363536;
}

.note-actions {
  display: flex;
  justify-content: space-between;
  margin-top: 0.51rem;
  padding: 0 0.325rem 0 0.33rem;
}

.note {
  display: flex;
  gap: 0.25rem;
  height: 2.015rem;
  margin-top: 0.203rem;
  padding: 0.38rem 0.42rem 0;
}

.note-ic {
  width: 0.66rem;
  height: 0.66rem;
  margin-top: 0.045rem;
}

.note p {
  margin-top: 0.075rem;
}
```
